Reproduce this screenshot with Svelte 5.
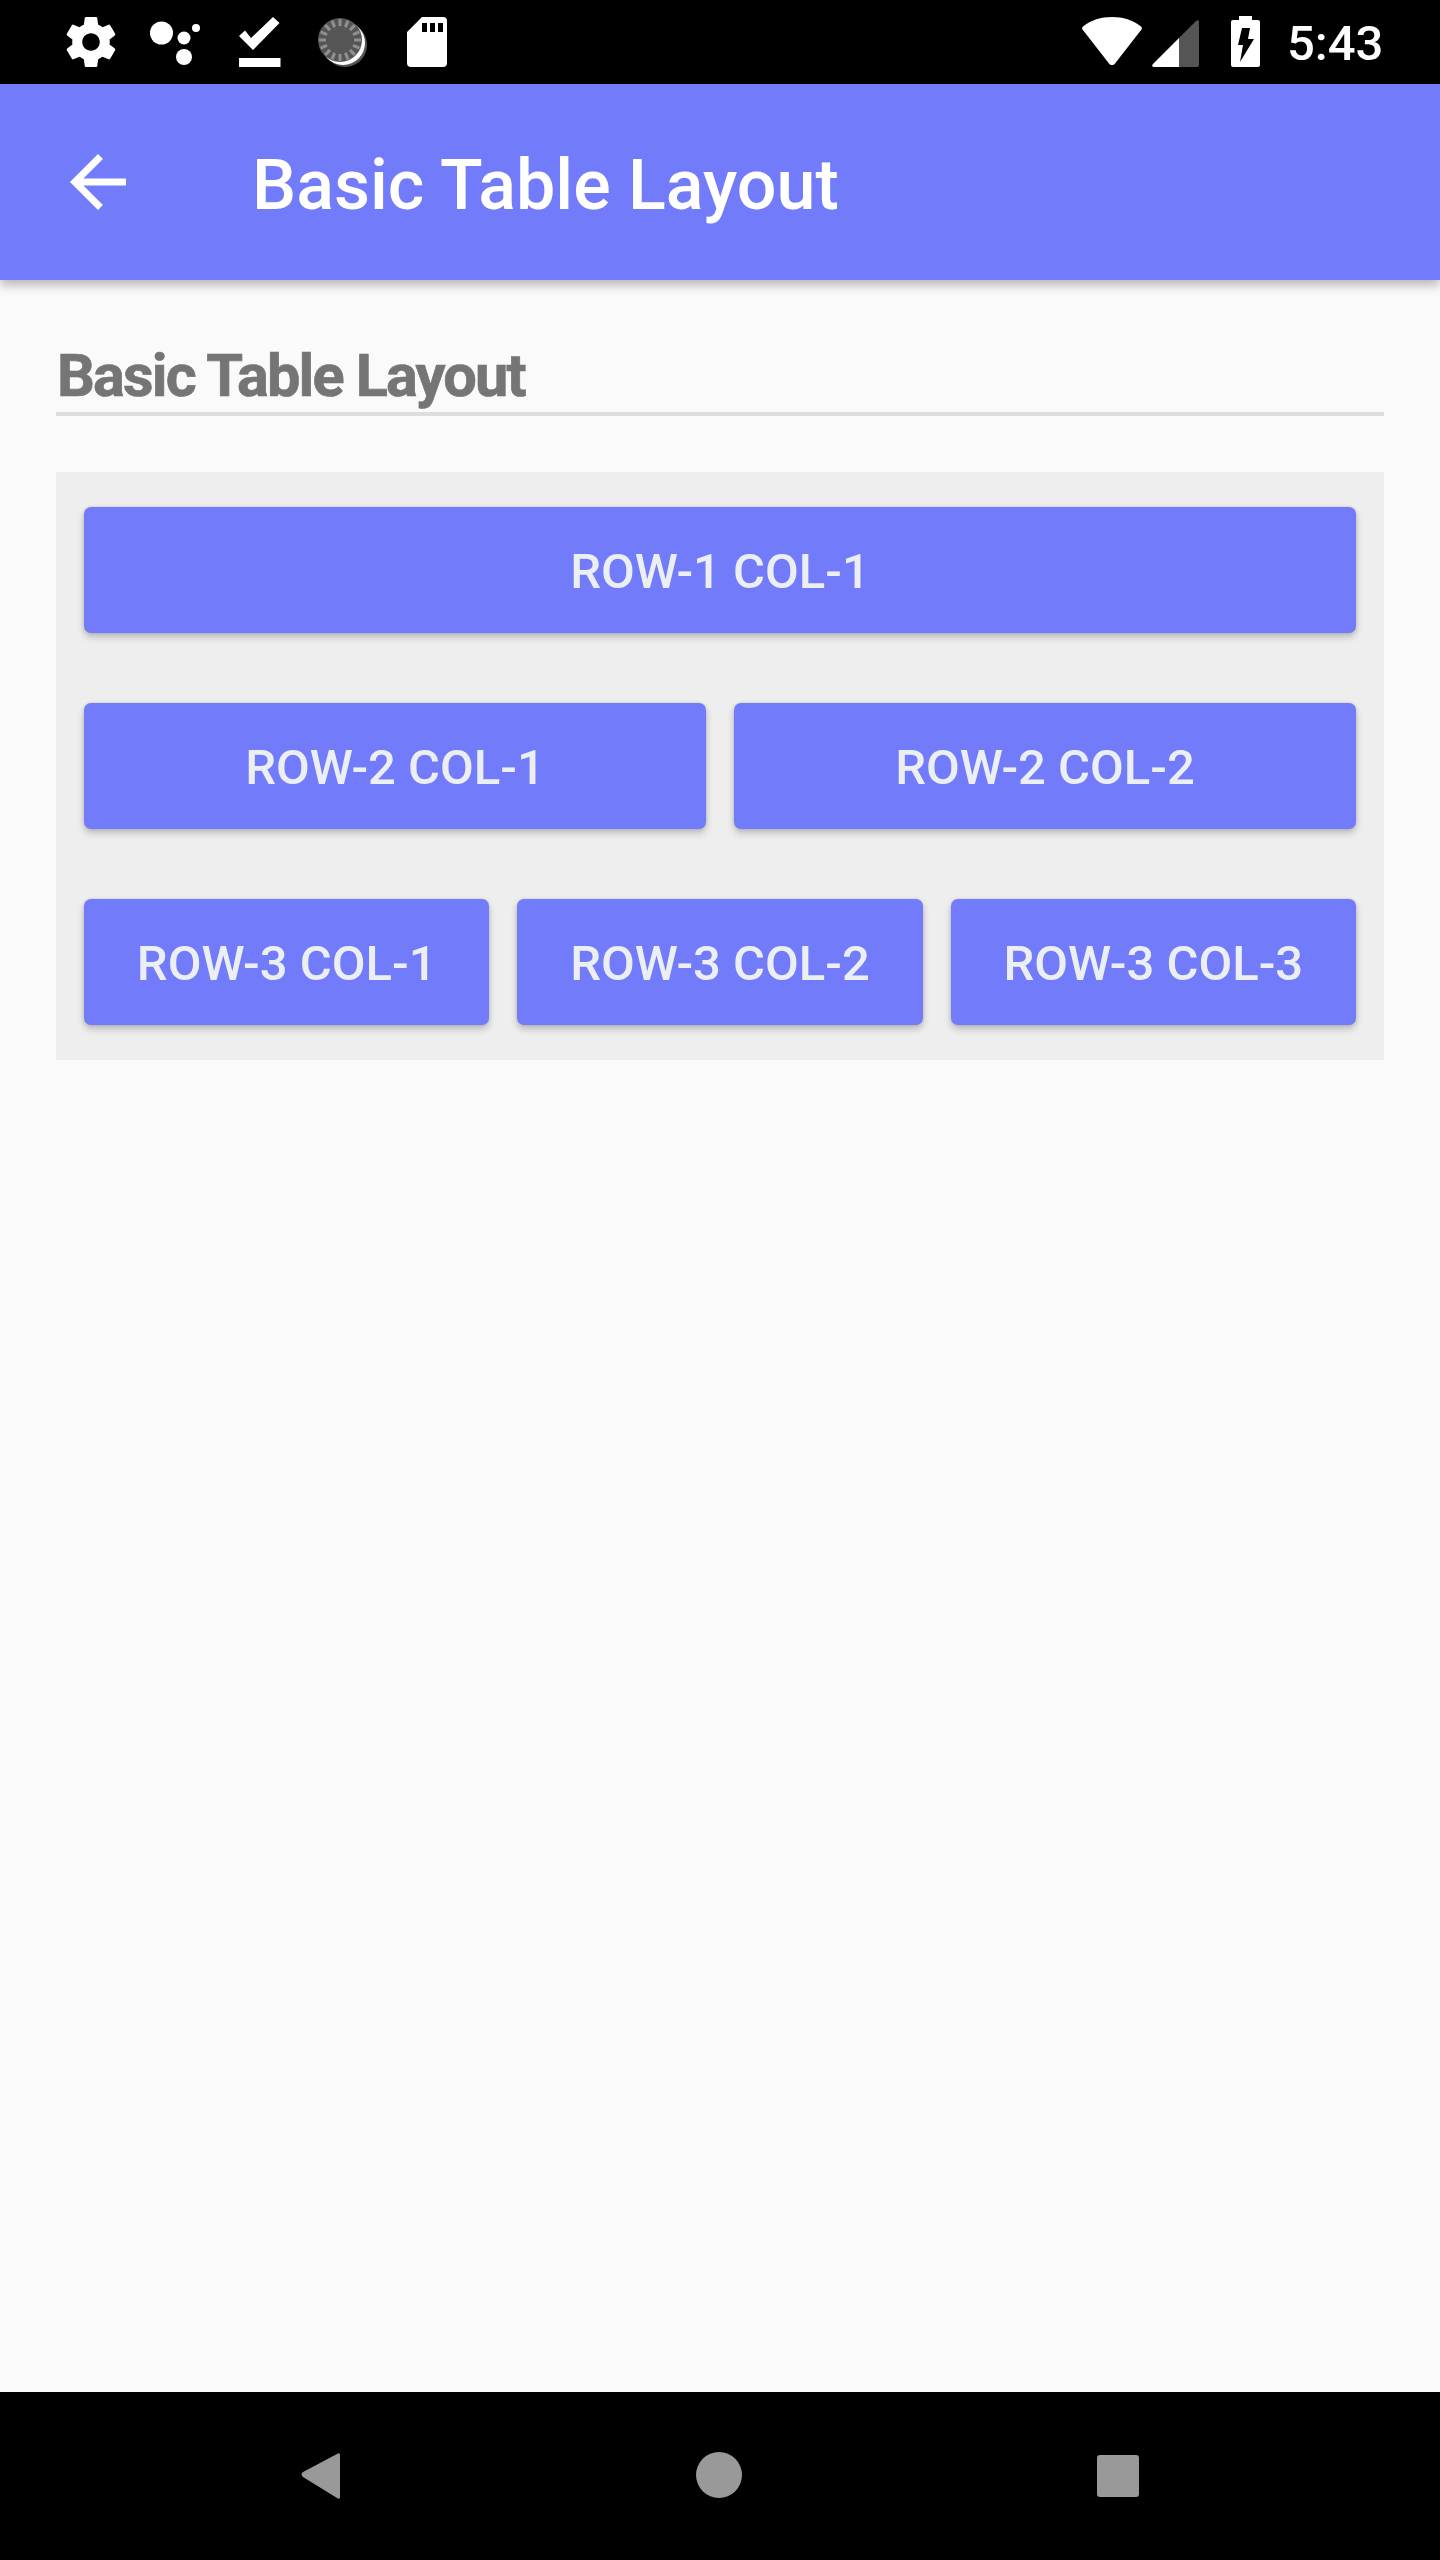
<script>
  const rows = [
    ['ROW-1 COL-1'],
    ['ROW-2 COL-1', 'ROW-2 COL-2'],
    ['ROW-3 COL-1', 'ROW-3 COL-2', 'ROW-3 COL-3']
  ];
  const ticks = Array.from({ length: 16 }, (_, i) => i * 22.5);
</script>

<div class="screen">
  <div class="status">
    <svg class="left-icons" width="400" height="84" viewBox="60 0 400 84" aria-hidden="true">
      <g transform="translate(61 12) scale(2.5)" fill="#fff">
        <path d="M19.43 12.98c.04-.32.07-.64.07-.98s-.03-.66-.07-.98l2.11-1.65c.19-.15.24-.42.12-.64l-2-3.46c-.12-.22-.39-.3-.61-.22l-2.49 1c-.52-.4-1.08-.73-1.69-.98l-.38-2.65C14.46 2.18 14.25 2 14 2h-4c-.25 0-.46.18-.49.42l-.38 2.65c-.61.25-1.17.59-1.69.98l-2.49-1c-.23-.09-.49 0-.61.22l-2 3.46c-.13.22-.07.49.12.64l2.11 1.65c-.04.32-.07.65-.07.98s.03.66.07.98l-2.11 1.65c-.19.15-.24.42-.12.64l2 3.46c.12.22.39.3.61.22l2.49-1c.52.4 1.08.73 1.69.98l.38 2.65c.03.24.24.42.49.42h4c.25 0 .46-.18.49-.42l.38-2.65c.61-.25 1.17-.59 1.69-.98l2.49 1c.23.09.49 0 .61-.22l2-3.46c.12-.22.07-.49-.12-.64l-2.11-1.65zM12 15.5c-1.93 0-3.5-1.57-3.5-3.5s1.57-3.5 3.5-3.5 3.5 1.57 3.5 3.5-1.57 3.5-3.5 3.5z"/>
      </g>
      <g fill="#fff">
        <circle cx="161.500" cy="33" r="11.500"/>
        <circle cx="184" cy="38" r="6.500"/>
        <circle cx="196" cy="28" r="4"/>
        <circle cx="184" cy="57" r="8"/>
        <path d="M239 58h41.500v9h-41.500z"/>
        <path d="M239 36l6-5.500 6 7.500 22-21 6.500 6-26.500 27z"/>
      </g>
      <g>
        <circle cx="345" cy="45" r="22" fill="#555"/>
        <circle cx="343" cy="43" r="22" fill="#fff"/>
        <circle cx="340" cy="40" r="22" fill="#555"/>
        {#each ticks as a}
          <rect x="338.500" y="19" width="3" height="7" fill="#8f8f8f" transform="rotate({a} 340 40)"/>
        {/each}
      </g>
      <path fill="#fff" fill-rule="evenodd" d="M422 17h21a4 4 0 0 1 4 4v42a4 4 0 0 1-4 4h-32a4 4 0 0 1-4-4V32zM422 23v9h5v-9zM430 23v9h5v-9zM438 23v9h5v-9z"/>
    </svg>

    <div class="right-group">
      <svg width="190" height="84" viewBox="1075 0 190 84" aria-hidden="true">
        <path fill="#fff" d="M1112 17c11 0 21 3 29 9.500 1 .8 1.300 2 .5 3L1115 63.500c-1.500 2-4.500 2-6 0L1082.500 29.500c-.8-1-.5-2.200.5-3C1091 20 1101 17 1112 17z"/>
        <path fill="#555" d="M1179 67V38l17-17c1.500-1.500 3-.8 3 1v43a2 2 0 0 1-2 2z"/>
        <path fill="#fff" d="M1179 38v29h-25c-2 0-2.500-1.500-1-3z"/>
        <path fill="#fff" fill-rule="evenodd" d="M1239 16h13v4h6a2 2 0 0 1 2 2v43a2 2 0 0 1-2 2h-25a2 2 0 0 1-2-2V22a2 2 0 0 1 2-2h6zM1242 28h8l-2 11h6l-14 23 3-17h-5z"/>
      </svg>
      <span class="time">5:43</span>
    </div>
  </div>

  <header class="appbar">
    <svg class="back" width="84" height="84" viewBox="0 0 24 24" aria-hidden="true">
      <path fill="#fff" d="M20 11H7.830l5.590-5.590L12 4l-8 8 8 8 1.410-1.410L7.830 13H20v-2z"/>
    </svg>
    <h1>Basic Table Layout</h1>
  </header>

  <main class="content">
    <h2>Basic Table Layout</h2>
    <div class="panel">
      {#each rows as row}
        <div class="row">
          {#each row as label}
            <button type="button">{label}</button>
          {/each}
        </div>
      {/each}
    </div>
  </main>

  <nav class="navbar">
    <svg width="900" height="168" viewBox="260 2392 900 168" aria-hidden="true">
      <path fill="#999" d="M337 2454c1.500-1.500 3-.8 3 1.500v41c0 2.300-1.500 3-3 1.500l-34-21c-2-1.500-2-3.500 0-5z"/>
      <circle cx="719" cy="2475" r="23" fill="#999"/>
      <rect x="1097" y="2455" width="42" height="42" rx="3" fill="#999"/>
    </svg>
  </nav>
</div>

<style>
  :global(body) {
    margin: 0;
    background: #fafafa;
  }

  .screen {
    width: 1440px;
    height: 2560px;
    display: flex;
    flex-direction: column;
    background: #fafafa;
    font-family: Roboto, "Liberation Sans", sans-serif;
    overflow: hidden;
  }

  .status {
    height: 84px;
    flex: none;
    box-sizing: border-box;
    background: #000;
    display: flex;
    justify-content: space-between;
    padding: 0 58px 0 60px;
  }

  .status svg {
    display: block;
  }

  .right-group {
    display: flex;
  }

  .time {
    width: 95px;
    margin-left: 22px;
    padding-top: 2px;
    color: #fff;
    font-size: 49px;
    font-weight: 500;
    line-height: 84px;
    white-space: nowrap;
  }

  .appbar {
    height: 196px;
    flex: none;
    display: flex;
    align-items: center;
    background: #727cfb;
    padding-left: 56px;
    box-shadow: 0 5px 10px rgba(0, 0, 0, 0.28);
    z-index: 1;
  }

  .back {
    flex: none;
    margin-right: 112px;
  }

  h1 {
    margin: 0;
    padding-top: 6px;
    color: #fff;
    font-size: 70px;
    font-weight: 500;
    line-height: 84px;
  }

  .content {
    flex: 1;
    padding: 56px 56px 0;
  }

  h2 {
    margin: 0;
    height: 76px;
    color: #757575;
    font-size: 59.500px;
    font-weight: 700;
    line-height: 80px;
    letter-spacing: -1.850px;
    -webkit-text-stroke: 0.7px #757575;
    border-bottom: 4px solid #dedede;
    padding-left: 1px;
  }

  .panel {
    margin-top: 56px;
    padding: 35px 28px;
    background: #eeeeee;
    display: flex;
    flex-direction: column;
    gap: 70px;
  }

  .row {
    display: flex;
    gap: 28px;
  }

  button {
    flex: 1 1 0;
    min-width: 0;
    height: 126px;
    border: 0;
    padding: 3px 0 0;
    border-radius: 7px;
    background: #727cfb;
    color: #eceff1;
    font-family: inherit;
    font-size: 49px;
    font-weight: 500;
    box-shadow: 0 4px 7px rgba(0, 0, 0, 0.22), 0 0 3px rgba(0, 0, 0, 0.12);
  }

  .navbar {
    height: 168px;
    flex: none;
    background: #000;
    display: flex;
    padding-left: 260px;
  }

  .navbar svg {
    display: block;
  }
</style>
